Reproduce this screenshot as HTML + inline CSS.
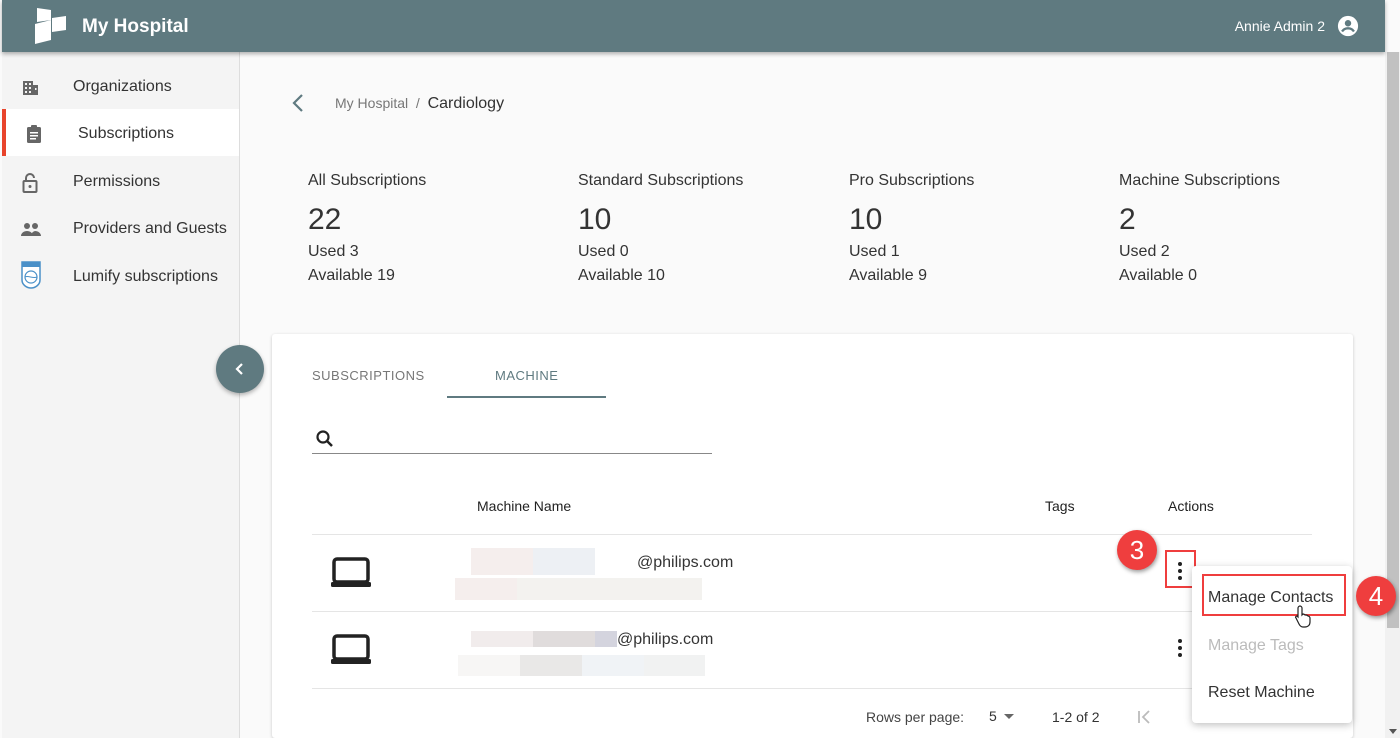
<!DOCTYPE html>
<html><head><style>
*{box-sizing:border-box;margin:0;padding:0}
html,body{width:1400px;height:738px;overflow:hidden}
body{font-family:"Liberation Sans",Roboto,sans-serif;background:#fafafa;position:relative;color:#333}
.hdr{position:absolute;left:2px;top:0;width:1383px;height:52px;background:#5f7a80;box-shadow:0 2px 4px rgba(0,0,0,.3);z-index:3}
.hdr .t{position:absolute;left:80px;top:16px;color:#fff;font-size:19px;font-weight:bold}
.hdr .u{position:absolute;right:60px;top:18px;color:#fff;font-size:14px}
.side{position:absolute;left:2px;top:52px;width:238px;height:686px;background:#f4f4f4;border-right:1px solid #ddd}
.item{position:absolute;left:0;width:237px;height:47px;font-size:16px;color:#333}
.item span{position:absolute;left:71px;top:16px}
.item svg{position:absolute;left:18px;top:15px}
.sel{background:#fff;border-left:4px solid #e8442b}
.main{position:absolute;left:240px;top:52px;width:1145px;height:686px;background:#fafafa}
.sb{position:absolute;left:1385px;top:52px;width:15px;height:686px;background:#f1f1f1}
.thumb{position:absolute;left:1387px;top:52px;width:12px;height:576px;background:#c1c1c1}
.stat{position:absolute;top:169px;font-size:16px;color:#333;line-height:24px}
.stat .n{font-size:30px;line-height:40px;margin-top:7px}
.card{position:absolute;left:272px;top:334px;width:1081px;height:404px;background:#fff;border-radius:3px;box-shadow:0 1px 3px rgba(0,0,0,.2)}
.abs{position:absolute}
.line{position:absolute;height:1px;background:#e5e5e5}
.menu{position:absolute;left:1192px;top:566px;width:160px;height:157px;background:#fff;border-radius:4px;box-shadow:0 2px 8px rgba(0,0,0,.25);font-size:16px;z-index:4}
.badge{position:absolute;width:40px;height:40px;border-radius:50%;background:#ef3e3e;color:#fff;font-size:26px;text-align:center;line-height:40px;box-shadow:1px 2px 4px rgba(0,0,0,.4);z-index:5}
.blur{position:absolute;height:25px}
</style></head><body>
<div class="hdr">
<svg class="abs" style="left:30px;top:6px" width="38" height="40" viewBox="0 0 38 40"><path d="M5 2l14 2v10l-14 2z M3 18l16-4v20L3 38z M20 12l14-2v14l-14 2z" fill="#fff"/></svg>
<div class="t">My Hospital</div>
<div class="u">Annie Admin 2</div>
<svg class="abs" style="right:26px;top:15px" width="22" height="22" viewBox="0 0 24 24"><circle cx="12" cy="12" r="11" fill="#fff"/><circle cx="12" cy="9" r="3.5" fill="#5f7a80"/><path d="M5.5 18c1.5-2.5 4-3.5 6.5-3.5s5 1 6.5 3.5" stroke="#5f7a80" stroke-width="2.5" fill="none"/></svg>
</div>
<div class="side">
<div class="item" style="top:10px"><svg width="20" height="20" viewBox="0 0 20 20"><path d="M3 4h10v14H3zM13 8h5v10h-5z" fill="#666"/><g fill="#f4f4f4"><rect x="5" y="6" width="2" height="2"/><rect x="9" y="6" width="2" height="2"/><rect x="5" y="10" width="2" height="2"/><rect x="9" y="10" width="2" height="2"/><rect x="5" y="14" width="2" height="2"/><rect x="9" y="14" width="2" height="2"/><rect x="15" y="11" width="1.5" height="2"/></g></svg><span>Organizations</span></div>
<div class="item sel" style="top:57px"><svg style="left:18px" width="20" height="20" viewBox="0 0 20 20"><rect x="3" y="3" width="14" height="16" rx="1.5" fill="#666"/><rect x="7" y="1" width="6" height="4" rx="1" fill="#666"/><g fill="#fff"><rect x="6" y="8" width="8" height="1.5"/><rect x="6" y="11" width="8" height="1.5"/><rect x="6" y="14" width="6" height="1.5"/></g></svg><span style="left:72px">Subscriptions</span></div>
<div class="item" style="top:105px"><svg width="20" height="22" viewBox="0 0 20 22"><path d="M6 9V6a4 4 0 018 0" stroke="#666" stroke-width="2" fill="none"/><rect x="3.5" y="9" width="13" height="11" rx="1" stroke="#666" stroke-width="2" fill="none"/><circle cx="10" cy="14.5" r="1.5" fill="#666"/></svg><span>Permissions</span></div>
<div class="item" style="top:152px"><svg width="22" height="20" viewBox="0 0 22 20"><circle cx="7" cy="7" r="3" fill="#666"/><circle cx="15" cy="7" r="3" fill="#666"/><path d="M1 17c0-3 3-5 6-5s6 2 6 5zM11 17c0-2 1-4 4-5 3 0 6 2 6 5z" fill="#666"/></svg><span>Providers and Guests</span></div>
<div class="item" style="top:200px"><svg style="top:8px" width="22" height="30" viewBox="0 0 22 30"><path d="M2 2h18v18c0 5-5 8-9 8s-9-3-9-8z" fill="#fff" stroke="#4a90c8" stroke-width="1.5"/><rect x="2" y="2" width="18" height="5" fill="#4a90c8"/><circle cx="11" cy="17" r="6" fill="none" stroke="#4a90c8" stroke-width="1.2"/><path d="M5 17c3-2 8 2 12 0" stroke="#4a90c8" fill="none"/></svg><span>Lumify subscriptions</span></div>
</div>
<div class="main"></div>
<svg class="abs" style="left:290px;top:93px" width="16" height="20" viewBox="0 0 16 20"><path d="M12 2L4 10l8 8" stroke="#5f7a80" stroke-width="2.2" fill="none"/></svg>
<div class="abs" style="left:335px;top:95px;font-size:14px;color:#777">My Hospital &nbsp;/ &nbsp;<span style="color:#333;font-size:16px">Cardiology</span></div>
<div class="stat" style="left:308px">All Subscriptions<div class="n">22</div>Used 3<br>Available 19</div>
<div class="stat" style="left:578px">Standard Subscriptions<div class="n">10</div>Used 0<br>Available 10</div>
<div class="stat" style="left:849px">Pro Subscriptions<div class="n">10</div>Used 1<br>Available 9</div>
<div class="stat" style="left:1119px">Machine Subscriptions<div class="n">2</div>Used 2<br>Available 0</div>
<div class="card"></div>
<div class="abs" style="left:216px;top:345px;width:48px;height:48px;border-radius:50%;background:#5f7a80;box-shadow:0 2px 4px rgba(0,0,0,.3)"><svg class="abs" style="left:18px;top:17px" width="12" height="14" viewBox="0 0 12 14"><path d="M8 2L3 7l5 5" stroke="#fff" stroke-width="2.2" fill="none"/></svg></div>
<div class="abs" style="left:312px;top:368px;font-size:13px;color:#777;letter-spacing:.5px">SUBSCRIPTIONS</div>
<div class="abs" style="left:495px;top:368px;font-size:13px;color:#5f7a80;letter-spacing:.5px">MACHINE</div>
<div class="abs" style="left:447px;top:396px;width:159px;height:2px;background:#5f7a80"></div>
<svg class="abs" style="left:315px;top:429px" width="20" height="20" viewBox="0 0 20 20"><circle cx="8" cy="8" r="5.5" stroke="#222" stroke-width="2.2" fill="none"/><path d="M12 12l5 5" stroke="#222" stroke-width="2.5"/></svg>
<div class="abs" style="left:312px;top:453px;width:400px;height:1px;background:#888"></div>
<div class="abs" style="left:477px;top:498px;font-size:14px;color:#222">Machine Name</div>
<div class="abs" style="left:1045px;top:498px;font-size:14px;color:#222">Tags</div>
<div class="abs" style="left:1168px;top:498px;font-size:14px;color:#222">Actions</div>
<div class="line" style="left:312px;top:534px;width:1000px"></div>
<div class="line" style="left:312px;top:611px;width:1000px"></div>
<div class="line" style="left:312px;top:688px;width:1000px"></div>
<svg class="abs" style="left:331px;top:557px" width="40" height="32" viewBox="0 0 40 32"><rect x="3" y="2" width="34" height="23" rx="3" fill="none" stroke="#222" stroke-width="3.5"/><rect x="0" y="25" width="40" height="5" rx="1.5" fill="#222"/></svg>
<svg class="abs" style="left:331px;top:634px" width="40" height="32" viewBox="0 0 40 32"><rect x="3" y="2" width="34" height="23" rx="3" fill="none" stroke="#222" stroke-width="3.5"/><rect x="0" y="25" width="40" height="5" rx="1.5" fill="#222"/></svg>
<div class="blur" style="left:471px;top:548px;width:62px;height:27px;background:#f5eeed"></div>
<div class="blur" style="left:533px;top:548px;width:62px;height:27px;background:#edf0f4"></div>
<div class="abs" style="left:637px;top:554px;font-size:16px;color:#333">@philips.com</div>
<div class="blur" style="left:455px;top:578px;width:62px;height:22px;background:#f5eeed"></div>
<div class="blur" style="left:517px;top:578px;width:185px;height:22px;background:#f3f2ef"></div>
<div class="blur" style="left:471px;top:631px;width:62px;height:16px;background:#f1ecec"></div>
<div class="blur" style="left:533px;top:631px;width:62px;height:16px;background:#e0dcdc"></div>
<div class="blur" style="left:595px;top:631px;width:22px;height:16px;background:#d4d4de"></div>
<div class="abs" style="left:617px;top:631px;font-size:16px;color:#333">@philips.com</div>
<div class="blur" style="left:458px;top:655px;width:62px;height:21px;background:#f7f6f5"></div>
<div class="blur" style="left:520px;top:655px;width:62px;height:21px;background:#e9e8e7"></div>
<div class="blur" style="left:582px;top:655px;width:62px;height:21px;background:#f0f3f6"></div>
<div class="blur" style="left:644px;top:655px;width:61px;height:21px;background:#f1f2f2"></div>
<svg class="abs" style="left:1176px;top:561px" width="8" height="20" viewBox="0 0 8 20"><circle cx="4" cy="3" r="2" fill="#222"/><circle cx="4" cy="10" r="2" fill="#222"/><circle cx="4" cy="17" r="2" fill="#222"/></svg>
<div class="abs" style="left:1165px;top:550px;width:31px;height:38px;border:2px solid #ef3e3e"></div>
<svg class="abs" style="left:1176px;top:638px" width="8" height="20" viewBox="0 0 8 20"><circle cx="4" cy="3" r="2" fill="#222"/><circle cx="4" cy="10" r="2" fill="#222"/><circle cx="4" cy="17" r="2" fill="#222"/></svg>
<div class="abs" style="left:866px;top:709px;font-size:14px;color:#444">Rows per page:</div>
<div class="abs" style="left:989px;top:708px;font-size:14px;color:#333">5</div>
<svg class="abs" style="left:1003px;top:714px" width="12" height="6"><path d="M1 0h10L6 5z" fill="#666"/></svg>
<div class="abs" style="left:1052px;top:709px;font-size:14px;color:#333">1-2 of 2</div>
<svg class="abs" style="left:1137px;top:710px" width="16" height="14" viewBox="0 0 16 14"><path d="M2 1v12M12 1L6 7l6 6" stroke="#bbb" stroke-width="1.8" fill="none"/></svg>
<div class="menu">
<div class="abs" style="left:16px;top:23px;color:#333">Manage Contacts</div>
<div class="abs" style="left:16px;top:71px;color:#bbb">Manage Tags</div>
<div class="abs" style="left:16px;top:118px;color:#333">Reset Machine</div>
</div>
<div class="abs" style="left:1202px;top:574px;width:144px;height:42px;border:2px solid #ef3e3e;z-index:5"></div>
<svg class="abs" style="left:1294px;top:604px;z-index:6" width="18" height="24" viewBox="0 0 18 24"><path d="M6 2c1 0 2 1 2 2v7l1-1c1 0 2 1 2 1l1 0c1 0 2 1 2 1 1 0 2 1 2 2v4c0 3-2 5-5 5H9c-2 0-3-1-4-3L2 14c-1-1 0-2 1-2l1 1V4c0-1 1-2 2-2z" fill="#fff" stroke="#222" stroke-width="1.2"/></svg>
<div class="badge" style="left:1117px;top:530px">3</div>
<div class="badge" style="left:1356px;top:576px">4</div>
<div class="sb"></div><div class="thumb"></div>
<svg class="abs" style="left:1389px;top:729px" width="8" height="5"><path d="M0 0h8L4 5z" fill="#555"/></svg>
</body></html>
